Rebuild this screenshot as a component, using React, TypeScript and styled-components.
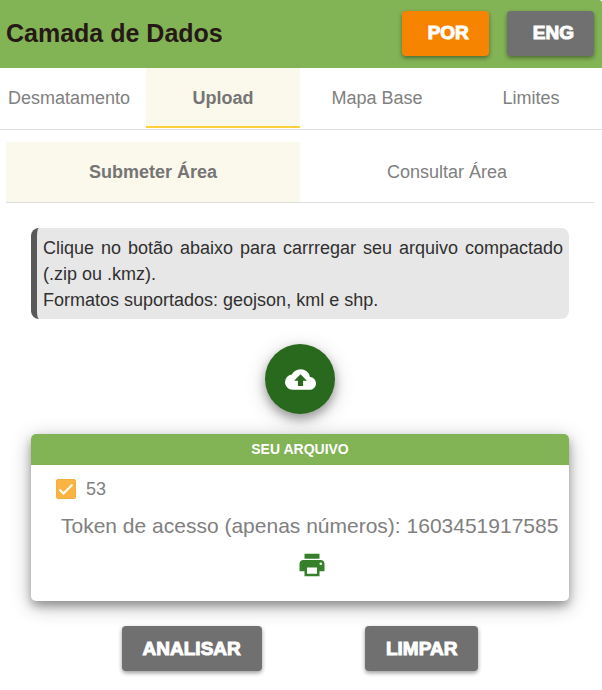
import React, { useState } from "react";
import styled, { createGlobalStyle } from "styled-components";
import { MdCloudUpload, MdPrint } from "react-icons/md";

const GlobalStyle = createGlobalStyle`
  *, *::before, *::after { box-sizing: border-box; }
  body {
    margin: 0;
    background: #fff;
    color: #757575;
    font-family: "Liberation Sans", Arial, sans-serif;
    font-size: 18px;
  }
  button { font-family: inherit; cursor: pointer; }
`;

const Panel = styled.div`
  overflow: hidden;
  padding-bottom: 19px;
`;

const Header = styled.header`
  display: flex;
  align-items: center;
  justify-content: space-between;
  height: 68px;
  padding: 0 8px 2px 6px;
  background: #82b355;
  border-top-right-radius: 3px;
`;

const Title = styled.h1`
  margin: 0;
  color: #261816;
  font-size: 25px;
  line-height: 30px;
`;

const Languages = styled.div`
  display: flex;
  gap: 18px;
`;

const Button = styled.button<{ $active?: boolean }>`
  height: 45px;
  padding: 0 21px;
  border: 0;
  border-radius: 4px;
  background: ${(p) => (p.$active ? "#f78400" : "#707070")};
  box-shadow: 0 2px 4px rgba(0, 0, 0, 0.4);
  color: #fff;
  font-size: 19px;
  font-weight: 900;
  -webkit-text-stroke: 1px #fff;
`;

const LanguageButton = styled(Button)`
  padding: 0 20px 0 26px;
`;

const Tabs = styled.nav`
  display: grid;
  grid-template-columns: repeat(4, 1fr);
  margin: 0 -6px 0 -8px;
  padding-bottom: 1px;
  border-bottom: 1px solid #dedede;
`;

const SubTabs = styled(Tabs)`
  grid-template-columns: repeat(2, 1fr);
  margin: 12px 8px 0 6px;
  padding-bottom: 0;
`;

const Tab = styled.button<{ $active?: boolean; $line?: boolean }>`
  height: 60px;
  padding: 2px 0 0;
  border: 0;
  border-bottom: 2px solid ${(p) => (p.$line ? "#ffd03a" : "transparent")};
  background: ${(p) => (p.$active ? "#fbf8ec" : "transparent")};
  background-clip: padding-box;
  color: ${(p) => (p.$active ? "#757575" : "#808080")};
  font-size: 18px;
  font-weight: ${(p) => (p.$active ? 700 : 400)};
`;

const SubTab = styled(Tab)`
  padding: 0;
  border-bottom: 0;
`;

const Content = styled.main`
  display: flex;
  flex-direction: column;
  align-items: center;
  padding: 25px 33px 0 31px;
`;

const Notice = styled.p`
  align-self: stretch;
  margin: 0;
  padding: 7px 6px 6px;
  border-left: 6px solid #595959;
  border-radius: 8px;
  background: #e7e7e7;
  color: #303030;
  line-height: 26px;
  text-align: justify;
`;

const UploadButton = styled.button`
  display: grid;
  place-items: center;
  width: 70px;
  height: 70px;
  margin: 25px 0 20px;
  padding: 0;
  border: 0;
  border-radius: 50%;
  background: #29691d;
  box-shadow: 0 5px 10px rgba(0, 0, 0, 0.28), 0 5px 20px rgba(0, 0, 0, 0.22);
  color: #fff;
`;

const Card = styled.section`
  align-self: stretch;
  border-radius: 5px;
  background: #fff;
  box-shadow: 0 5px 9px rgba(0, 0, 0, 0.26), 0 5px 20px rgba(0, 0, 0, 0.3);
`;

const CardTitle = styled.h2`
  margin: 0;
  border-radius: 5px 5px 0 0;
  background: #82b355;
  color: #fff;
  font-size: 14px;
  line-height: 31px;
  text-align: center;
`;

const CardBody = styled.div`
  display: flex;
  flex-direction: column;
  padding: 12px 5px 21px 25px;
`;

const FileLabel = styled.label`
  display: flex;
  align-items: center;
  gap: 10px;
  height: 24px;
  color: #808080;
`;

const CheckWrap = styled.span`
  display: grid;
  width: 20px;
  height: 20px;

  > * { grid-area: 1 / 1; }
  svg { pointer-events: none; }
  input:not(:checked) + svg { visibility: hidden; }
`;

const Checkbox = styled.input`
  appearance: none;
  width: 20px;
  height: 20px;
  margin: 0;
  border: 1px solid #f4ae40;
  border-radius: 2px;
  background: #fff;
  &:checked { background: #fbb441; }
`;

const Token = styled.p`
  margin: 12px 0 11px;
  padding-left: 5px;
  color: #808080;
  font-size: 21px;
  line-height: 26px;
  white-space: nowrap;
`;

const PrintButton = styled.button`
  display: flex;
  align-self: center;
  margin: 0 0 0 4px;
  padding: 0;
  border: 0;
  background: none;
  color: #37802b;
`;

const Actions = styled.div`
  display: flex;
  justify-content: space-around;
  align-self: stretch;
  margin-top: 25px;
  padding: 0 39px;
`;

const mainTabs = ["Desmatamento", "Upload", "Mapa Base", "Limites"];
const areaTabs = ["Submeter Área", "Consultar Área"];

export default function App() {
  const [language, setLanguage] = useState("POR");
  const [tab, setTab] = useState("Upload");
  const [areaTab, setAreaTab] = useState("Submeter Área");

  return (
    <Panel>
      <GlobalStyle />
      <Header>
        <Title>Camada de Dados</Title>
        <Languages>
          {["POR", "ENG"].map((name) => (
            <LanguageButton key={name} $active={language === name} onClick={() => setLanguage(name)}>
              {name}
            </LanguageButton>
          ))}
        </Languages>
      </Header>
      <Tabs>
        {mainTabs.map((name) => (
          <Tab key={name} $active={tab === name} $line={tab === name} onClick={() => setTab(name)}>
            {name}
          </Tab>
        ))}
      </Tabs>
      <SubTabs>
        {areaTabs.map((name) => (
          <SubTab key={name} $active={areaTab === name} onClick={() => setAreaTab(name)}>
            {name}
          </SubTab>
        ))}
      </SubTabs>
      <Content>
        <Notice>
          Clique no botão abaixo para carrregar seu arquivo compactado (.zip ou .kmz).
          <br />
          Formatos suportados: geojson, kml e shp.
        </Notice>
        <UploadButton aria-label="Upload">
          <MdCloudUpload size={31} />
        </UploadButton>
        <Card>
          <CardTitle>SEU ARQUIVO</CardTitle>
          <CardBody>
            <FileLabel>
              <CheckWrap>
                <Checkbox type="checkbox" defaultChecked />
                <svg viewBox="0 0 20 20" fill="none" stroke="#fff" strokeWidth="2">
                  <path d="M3.5 10.5 7.5 14.5 16.5 5.5" />
                </svg>
              </CheckWrap>
              53
            </FileLabel>
            <Token>Token de acesso (apenas números): 1603451917585</Token>
            <PrintButton aria-label="Imprimir">
              <MdPrint size={30} />
            </PrintButton>
          </CardBody>
        </Card>
        <Actions>
          <Button>ANALISAR</Button>
          <Button>LIMPAR</Button>
        </Actions>
      </Content>
    </Panel>
  );
}
